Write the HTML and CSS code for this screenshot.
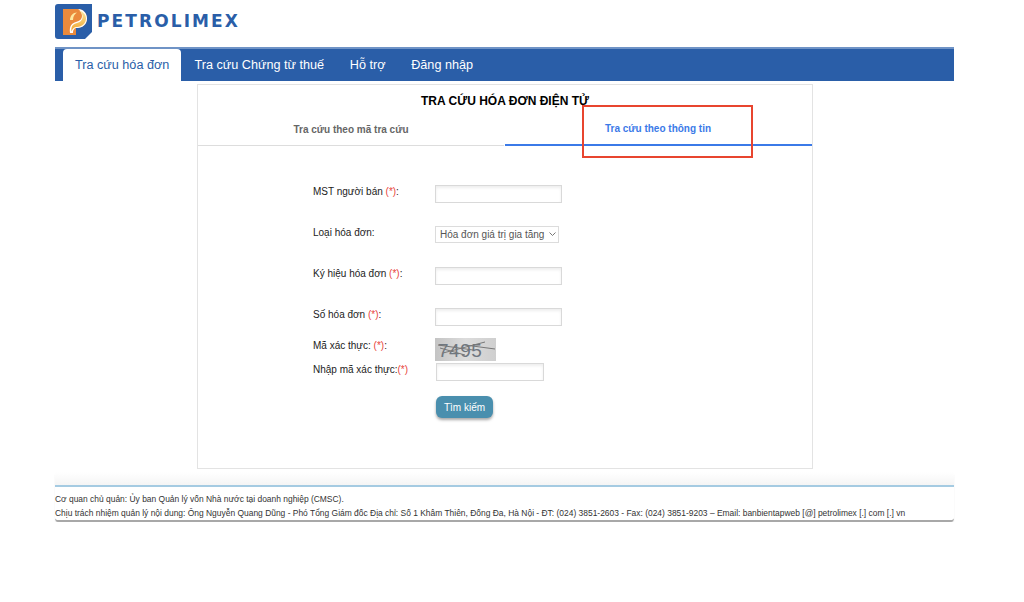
FILE: index.html
```html
<!DOCTYPE html>
<html lang="vi">
<head>
<meta charset="utf-8">
<title>Tra cứu hóa đơn</title>
<link rel="stylesheet" href="styles.css">
</head>
<body>
<div class="page">
  <header class="brand">
    <svg class="logo" width="37" height="35" viewBox="0 0 37 35">
      <defs>
        <linearGradient id="flame" x1="0" y1="0" x2="0" y2="1">
          <stop offset="0" stop-color="#fde9a0"/>
          <stop offset="1" stop-color="#efa52f"/>
        </linearGradient>
      </defs>
      <path d="M3 0H37V28L30 35H3Q0 35 0 32V3Q0 0 3 0Z" fill="#2a5ea8"/>
      <path d="M8 5H23C28 5 32 9 32 14.500C32 20 28 24 21 24V31H8Z" fill="#ea8a3c"/>
      <path d="M23 5C28 5 32 9 32 14.500C32 20 28 24 22 24C19 24 18 26 18 29H15C14 22 17 19 21 18C25 17 27 15 27 12C27 9 25 6 23 5Z" fill="#fff"/>
      <path d="M24 6.500C28 7.500 31 10.500 31 14.500C31 19 27 23 22 23C19 23 17.500 24.500 16.500 27.500C15.800 22 18 20 22 19C26 18 28 15 27.500 12C27.200 10 26 8 24 6.500Z" fill="url(#flame)"/>
      <path d="M15 16C15 12 18 8.500 22 8.500C20 10 18 12 18 16Z" fill="#fde9a0"/>
    </svg>
    <span class="wordmark">PETROLIMEX</span>
  </header>

  <nav class="nav">
    <a class="nav-item active">Tra cứu hóa đơn</a>
    <a class="nav-item">Tra cứu Chứng từ thuế</a>
    <a class="nav-item">Hỗ trợ</a>
    <a class="nav-item">Đăng nhập</a>
  </nav>

  <main class="panel">
    <h1 class="title">TRA CỨU HÓA ĐƠN ĐIỆN TỬ</h1>
    <div class="tabs">
      <div class="tab">Tra cứu theo mã tra cứu</div>
      <div class="tab tab-active">Tra cứu theo thông tin</div>
    </div>
    <div class="highlight"></div>

    <form class="form">
      <label class="label row-mst">MST người bán <span class="req">(*)</span>:</label>
      <input class="field row-mst" type="text">

      <label class="label row-type">Loại hóa đơn:</label>
      <div class="select row-type">
        <span>Hóa đơn giá trị gia tăng</span>
        <svg class="chevron" width="7" height="5" viewBox="0 0 7 5"><path d="M0.500 0.500L3.500 3.500L6.500 0.500" fill="none" stroke="#777" stroke-width="1"/></svg>
      </div>

      <label class="label row-sign">Ký hiệu hóa đơn <span class="req">(*)</span>:</label>
      <input class="field row-sign" type="text">

      <label class="label row-no">Số hóa đơn <span class="req">(*)</span>:</label>
      <input class="field row-no" type="text">

      <label class="label label-flush row-cap">Mã xác thực: <span class="req">(*)</span>:</label>
      <div class="captcha row-cap">
        <span>7495</span>
        <svg class="captcha-lines" width="61" height="23" viewBox="0 0 61 23">
          <path d="M3 7L38 12M8 15L50 4M30 7L60 11M5 10L30 17" fill="none" stroke="#777" stroke-width="1"/>
        </svg>
      </div>

      <label class="label row-enter">Nhập mã xác thực:<span class="req">(*)</span></label>
      <input class="field field-short row-enter" type="text">

      <button class="btn row-btn" type="button">Tìm kiếm</button>
    </form>
  </main>

  <footer class="footer">
    <div class="footer-top"></div>
    <p class="footer-line first">Cơ quan chủ quản: Ủy ban Quản lý vốn Nhà nước tại doanh nghiệp (CMSC).</p>
    <p class="footer-line">Chịu trách nhiệm quản lý nội dung: Ông Nguyễn Quang Dũng - Phó Tổng Giám đốc Địa chỉ: Số 1 Khâm Thiên, Đống Đa, Hà Nội - ĐT: (024) 3851-2603 - Fax: (024) 3851-9203 – Email: banbientapweb [@] petrolimex [.] com [.] vn</p>
  </footer>
</div>
</body>
</html>
```
FILE: styles.css
```css
* { box-sizing: border-box; }
html, body { margin: 0; padding: 0; background: #fff; }
body { font-family: "Liberation Sans", Arial, sans-serif; color: #222; }

.page { width: 899px; margin-left: 55px; }

.brand { height: 47px; display: flex; align-items: flex-start; padding-top: 4px; gap: 5px; }
.logo { display: block; flex: none; }
.wordmark {
  font-family: "DejaVu Sans", sans-serif;
  font-size: 17px; line-height: 20px; font-weight: 700; color: #2a5ea8;
  letter-spacing: 2.100px; margin-top: 7px; white-space: nowrap;
}

.nav {
  height: 34px; background: #2a5ea8; border-top: 2px solid #6f93c6;
  display: flex; padding-left: 8px; align-items: flex-end;
}
.nav-item {
  font-size: 12.650px; line-height: 32px; height: 32px; color: #fff;
  padding: 0 12.500px; margin-right: 0.700px; white-space: nowrap;
}
.nav-item.active {
  background: #fff; color: #2a5ea8; border-radius: 4px 4px 0 0;
  width: 118px; padding: 0 12px; margin-right: 1px;
}

.panel {
  position: relative;
  width: 616px; height: 385px; margin: 3px 0 0 142px;
  border: 1px solid #e3e3e3; background: #fff;
}
.title {
  margin: 0; padding-top: 8px; height: 33px; text-align: center;
  font-size: 12px; line-height: 16px; font-weight: 700; color: #000;
}
.tabs { display: grid; grid-template-columns: 306px 308px; }
.tab {
  height: 28px; line-height: 23px; text-align: center;
  font-size: 10px; font-weight: 700; color: #666;
  border-bottom: 1px solid #ddd;
}
.tab-active { color: #3b7ae8; border-bottom: 2px solid #3b7ae8; line-height: 21px; padding-right: 1px; margin-left: 1px; }
.highlight {
  position: absolute; left: 384px; top: 20px; width: 171px; height: 53px;
  border: 2px solid #e8452f;
}

.form {
  display: grid; grid-template-columns: 122px 1fr;
  grid-template-rows: 18px 23px 17px 24px 18px 23px 18px 12px 23px 2px 18px 15px 22px;
  padding: 39px 0 0 115px;
}
.row-mst { grid-row: 1; }
.row-type { grid-row: 3; }
.row-sign { grid-row: 5; }
.row-no { grid-row: 7; }
.row-cap { grid-row: 9; }
.row-enter { grid-row: 11; }
.row-btn { grid-row: 13; }

.label {
  grid-column: 1; font-size: 10px; line-height: 14px; color: #222;
  align-self: start;
}
.label-flush { margin-top: 1px; }
.req { color: #e8453c; }

.field {
  grid-column: 2; width: 127px; height: 18px; padding: 0;
  border: 1px solid #d9d9d9; background: #fff; box-shadow: inset 0 2px 3px #eee; outline: 0;
}
.field-short { width: 108px; margin-left: 1px; }

.select {
  grid-column: 2; width: 124px; height: 17px; padding: 0 2px 0 4px;
  border: 1px solid #dcdcdc; background: #fff; display: flex; align-items: center;
  justify-content: space-between; font-size: 10px; color: #555; white-space: nowrap;
}
.chevron { flex: none; display: block; }

.captcha {
  grid-column: 2; position: relative; width: 61px; height: 23px;
  background: linear-gradient(90deg, #c4c4c4, #dcdcdc 50%, #cfcfcf);
  font-size: 19px; line-height: 25px; color: #6f7780; padding-left: 3px; letter-spacing: 0.500px;
  overflow: hidden;
}
.captcha-lines { position: absolute; left: 0; top: 0; }

.btn {
  grid-column: 2; margin-left: 1px; width: 57px; height: 22px; padding: 0;
  border: 0; border-radius: 6px; background: #4a8fae; color: #fff;
  font: 10px "Liberation Sans", Arial, sans-serif;
  box-shadow: 0 2px 3px rgba(0, 0, 0, .35);
}

.footer {
  margin-top: 3px; height: 50px; border-radius: 0 0 4px 4px;
  border-bottom: 2px solid #a8a8a8;
  box-shadow: 0 2px 2px -1px rgba(0, 0, 0, .3);
  background: #fff;
}
.footer-top {
  height: 15px; background: linear-gradient(#fff, #f5f5f5);
  border-bottom: 2px solid #a5cbe2;
}
.footer-line {
  margin: 0; font-size: 8.450px; line-height: 14px; color: #333; white-space: nowrap;
}
.footer-line.first { margin-top: 5px; }
```
